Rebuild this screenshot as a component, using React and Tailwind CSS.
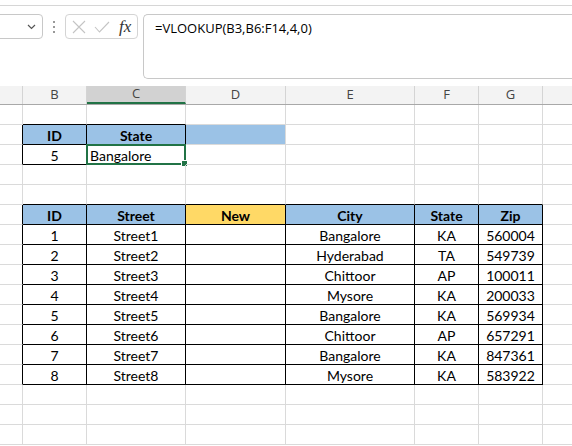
import React from 'react';

const COLS = [23, 64, 99, 100, 129, 64, 64, 60];
const LETTERS = ['', 'B', 'C', 'D', 'E', 'F', 'G', ''];

const BLUE = 'bg-[#9bc2e6]';
const YELLOW = 'bg-[#ffd966]';

const data = [
  [1, 'Street1', 'Bangalore', 'KA', '560004'],
  [2, 'Street2', 'Hyderabad', 'TA', '549739'],
  [3, 'Street3', 'Chittoor', 'AP', '100011'],
  [4, 'Street4', 'Mysore', 'KA', '200033'],
  [5, 'Street5', 'Bangalore', 'KA', '569934'],
  [6, 'Street6', 'Chittoor', 'AP', '657291'],
  [7, 'Street7', 'Bangalore', 'KA', '847361'],
  [8, 'Street8', 'Mysore', 'KA', '583922'],
];

// build the sheet: 17 rows x 8 cols
function buildRows() {
  const rows = [];
  for (let r = 1; r <= 17; r++) {
    rows.push(COLS.map(() => ({ text: '', bold: false, bg: '', left: false })));
  }
  const set = (r, c, v) => Object.assign(rows[r - 1][c], v);

  set(2, 1, { text: 'ID', bold: true, bg: BLUE });
  set(2, 2, { text: 'State', bold: true, bg: BLUE });
  set(2, 3, { bg: BLUE });
  set(3, 1, { text: '5' });
  set(3, 2, { text: 'Bangalore', left: true, selected: true });

  ['ID', 'Street', 'New', 'City', 'State', 'Zip'].forEach((h, i) => {
    set(6, i + 1, { text: h, bold: true, bg: h === 'New' ? YELLOW : BLUE });
  });
  data.forEach((d, i) => {
    set(7 + i, 1, { text: String(d[0]) });
    set(7 + i, 2, { text: d[1] });
    set(7 + i, 4, { text: d[2] });
    set(7 + i, 5, { text: d[3] });
    set(7 + i, 6, { text: d[4] });
  });
  return rows;
}

const inTable = (r, c) =>
  (r >= 2 && r <= 3 && c >= 1 && c <= 2) || (r >= 6 && r <= 14 && c >= 1 && c <= 6);

function Cell({ r, c, cell }) {
  const right = inTable(r, c) || inTable(r, c + 1) ? 'border-r-black' : 'border-r-[#dadada]';
  const bottom = inTable(r, c) || inTable(r + 1, c) ? 'border-b-black' : 'border-b-[#dadada]';
  return (
    <div
      style={{ width: COLS[c] }}
      className={`relative shrink-0 h-5 border-r border-b flex items-center pt-[1px] ${right} ${bottom} ${cell.bg} ${
        cell.left ? 'justify-start pl-[3px]' : 'justify-center'
      } ${cell.bold ? 'font-bold' : ''}`}
    >
      {cell.text}
      {cell.selected && (
        <>
          <div className="absolute -left-px -top-px -right-px -bottom-px border-2 border-[#217346]" />
          <div className="absolute -right-[3px] -bottom-[3px] w-[5px] h-[5px] bg-[#217346] border border-white box-content" />
        </>
      )}
    </div>
  );
}

function FormulaBar() {
  return (
    <div className="h-[81px] bg-white border-t border-[#d6d6d6] mt-[5px]">
      <div className="flex items-start pt-[8px]">
        {/* name box */}
        <div className="w-[49px] h-[25px] -ml-[6px] border border-[#c8c8c8] rounded-[4px] flex items-center justify-end pr-[6px]">
          <svg width="9" height="6" viewBox="0 0 9 6">
            <path d="M1 1l3.5 3.5L8 1" fill="none" stroke="#555" strokeWidth="1.2" />
          </svg>
        </div>
        {/* dots */}
        <div className="w-[22px] flex flex-col items-center gap-[3px] pt-[7px]">
          <div className="w-[2px] h-[2px] bg-[#999]" />
          <div className="w-[2px] h-[2px] bg-[#999]" />
          <div className="w-[2px] h-[2px] bg-[#999]" />
        </div>
        {/* cancel / enter / fx */}
        <div className="w-[73px] h-[25px] border border-[#d4d4d4] rounded-[4px] flex items-center pl-[6px] gap-[8px]">
          <svg width="14" height="14" viewBox="0 0 14 14">
            <path d="M1 1l12 12M13 1L1 13" stroke="#c4c4c4" strokeWidth="1.1" />
          </svg>
          <svg width="16" height="12" viewBox="0 0 16 12">
            <path d="M1 6l4.5 5L15 1" fill="none" stroke="#c4c4c4" strokeWidth="1.1" />
          </svg>
          <span className="font-['Liberation_Serif',serif] italic text-[17px] text-[#333] leading-none pl-[1px]">
            fx
          </span>
        </div>
        {/* formula input */}
        <div className="ml-[5px] flex-1 h-[65px] border border-[#c8c8c8] rounded-l-[5px] border-r-0 pl-[11px] pt-[4px] font-['Open_Sans',sans-serif] text-[13px] text-black">
          =VLOOKUP(B3,B6:F14,4,0)
        </div>
      </div>
    </div>
  );
}

export default function App() {
  const rows = buildRows();
  return (
    <div className="w-[572px] h-[446px] overflow-hidden bg-white font-['Lato',sans-serif] text-[14px] text-black">
      <FormulaBar />
      {/* column headers */}
      <div className="flex h-[19px] bg-[#f3f3f3] border-b border-[#a8a8a8] font-['Open_Sans',sans-serif] text-[13px] text-[#444]">
        {COLS.map((w, i) => (
          <div
            key={i}
            style={{ width: w }}
            className={`shrink-0 flex items-center justify-center border-r border-[#d4d4d4] ${
              i === 2 ? 'bg-[#d2d2d2] border-b-2 border-b-[#217346]' : ''
            }`}
          >
            {LETTERS[i]}
          </div>
        ))}
      </div>
      {/* grid */}
      <div>
        {rows.map((row, ri) => (
          <div key={ri} className="flex">
            {row.map((cell, ci) => (
              <Cell key={ci} r={ri + 1} c={ci} cell={cell} />
            ))}
          </div>
        ))}
      </div>
    </div>
  );
}
